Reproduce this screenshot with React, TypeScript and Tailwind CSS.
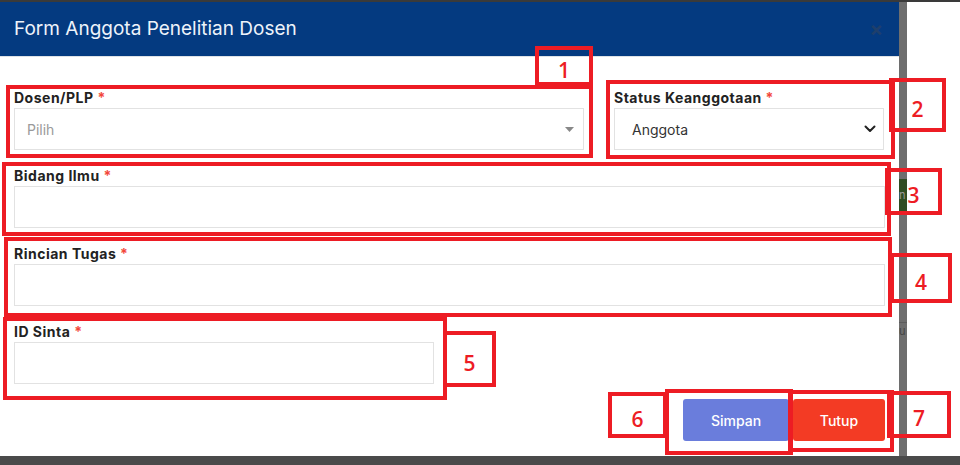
import React from 'react';

const ff = { fontFamily: 'Inter, "Noto Sans", sans-serif' };

function Label({ text }: { text: string }) {
  return (
    <label className="block h-[20px] text-[14px] leading-[20px] font-bold tracking-[0.5px] text-[#222]">
      {text} <span className="text-[#f2473a]">*</span>
    </label>
  );
}

function Mark({ x, y, w, h, num }: { x: number; y: number; w: number; h: number; num?: string }) {
  return (
    <div
      className="absolute border-4 border-[#ed1c24] flex items-center justify-center pt-[8px]"
      style={{ left: x, top: y, width: w, height: h }}
    >
      {num && (
        <span className="text-[21px] font-semibold text-[#ed1c24] leading-none" style={{ fontFamily: '"Open Sans", sans-serif' }}>
          {num}
        </span>
      )}
    </div>
  );
}

export default function App() {
  return (
    <div className="relative w-[960px] h-[465px] overflow-hidden bg-white" style={ff}>
      <div className="h-[2px] bg-[#3a3a3a]" />
      <div className="flex h-[454px]">
        <div className="w-[899px] flex flex-col bg-white">
          <div className="h-[55px] shrink-0 bg-[#043a80] border-b border-[#dee2e6] flex items-center justify-between pl-[14px] pr-[16px]">
            <h1 className="text-[19px] text-[#eef3fa]">Form Anggota Penelitian Dosen</h1>
            <span className="text-[20px] font-bold text-[#1e3f6c] leading-none">×</span>
          </div>
          <div className="flex-1 px-[14px] pt-[31px]">
            <div className="grid grid-cols-[570px_270px] gap-x-[30px]">
              <div className="mb-[16px]">
                <Label text="Dosen/PLP" />
                <div className="h-[42px] border border-[#e2e2e2] flex items-center justify-between pl-[12px] pr-[9px]">
                  <span className="text-[14px] text-[#9a9a9a]">Pilih</span>
                  <svg width="9" height="5" viewBox="0 0 9 5"><path d="M0 0h9L4.5 5z" fill="#888" /></svg>
                </div>
              </div>
              <div className="mb-[16px]">
                <Label text="Status Keanggotaan" />
                <div className="h-[42px] border border-[#e2e2e2] flex items-center justify-between pl-[17px] pr-[7px]">
                  <span className="text-[14px] text-[#333]">Anggota</span>
                  <svg width="12" height="8" viewBox="0 0 12 8"><path d="M1.5 1.5 6 6l4.5-4.5" stroke="#222" strokeWidth="2" fill="none" strokeLinecap="round" strokeLinejoin="round" /></svg>
                </div>
              </div>
            </div>
            <div className="mb-[16px]">
              <Label text="Bidang Ilmu" />
              <div className="h-[42px] border border-[#e2e2e2]" />
            </div>
            <div className="mb-[16px]">
              <Label text="Rincian Tugas" />
              <div className="h-[42px] border border-[#e2e2e2]" />
            </div>
            <div className="w-[420px]">
              <Label text="ID Sinta" />
              <div className="h-[42px] border border-[#e2e2e2]" />
            </div>
            <div className="flex justify-end gap-[4px] mt-[15px]">
              <button className="w-[106px] h-[42px] rounded-[3px] bg-[#6a7ddc] text-white text-[14px] font-medium">Simpan</button>
              <button className="w-[92px] h-[42px] rounded-[3px] bg-[#f33b24] text-white text-[14px] font-medium">Tutup</button>
            </div>
          </div>
        </div>
        <div className="w-[8px] bg-[#6e6e6e] flex flex-col">
          <div className="h-[177px]" />
          <div className="h-[32px] bg-[#2f4d22] text-[11px] text-[#999] overflow-hidden leading-[32px]">n</div>
          <div className="h-[112px] border-b border-[#5c5c5c]" />
          <div className="h-[34px] text-[11px] text-[#444] overflow-hidden">u</div>
        </div>
        <div className="flex-1 bg-white" />
      </div>
      <div className="h-[9px] bg-[#4a4a4a]" />

      <Mark x={6} y={85} w={587} h={73} />
      <Mark x={535} y={46} w={58} h={40} num="1" />
      <Mark x={606} y={80} w={289} h={79} />
      <Mark x={889} y={78} w={57} h={54} num="2" />
      <Mark x={2} y={162} w={889} h={74} />
      <Mark x={885} y={168} w={57} h={47} num="3" />
      <Mark x={4} y={237} w={888} h={80} />
      <Mark x={890} y={253} w={62} h={50} num="4" />
      <Mark x={3} y={317} w={444} h={83} />
      <Mark x={443} y={331} w={53} h={56} num="5" />
      <Mark x={665} y={389} w={128} h={66} />
      <Mark x={608} y={392} w={59} h={46} num="6" />
      <Mark x={788} y={390} w={106} h={62} />
      <Mark x={887} y={391} w={64} h={47} num="7" />
    </div>
  );
}
